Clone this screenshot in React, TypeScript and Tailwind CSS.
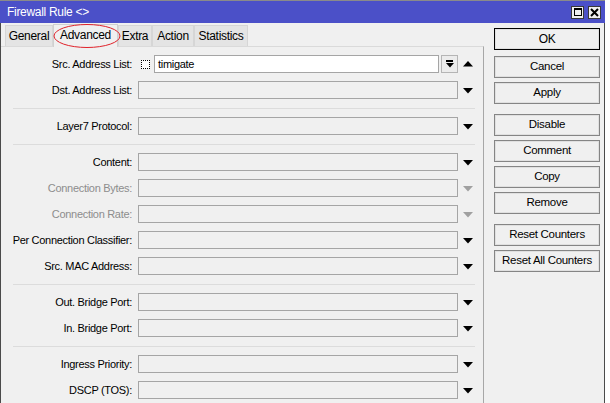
import React from "react";

const font = "font-['Liberation_Sans',Arial,sans-serif] text-[11px] tracking-[-0.3px]";

function Down({ gray = false }: { gray?: boolean }) {
  return (
    <svg width="10" height="6" viewBox="0 0 10 6" className="ml-[5px] mt-[1px]">
      <polygon points="0,0 10,0 5,5.5" fill={gray ? "#a0a0a0" : "#000"} />
    </svg>
  );
}

function Up() {
  return (
    <svg width="10" height="6" viewBox="0 0 10 6" className="ml-[5px] -mt-[1px]">
      <polygon points="5,0 10,5.5 0,5.5" fill="#000" />
    </svg>
  );
}

function Row({ label, disabled = false }: { label: string; disabled?: boolean }) {
  return (
    <div className="flex h-[26px] items-center">
      <div className={`w-[131px] text-right ${disabled ? "text-[#8d8d8d]" : "text-black"}`}>{label}</div>
      <div className="ml-[6px] h-[18px] w-[320px] border border-[#a5a5a5] bg-[#f0f0f0]" />
      <Down gray={disabled} />
    </div>
  );
}

function Sep() {
  return (
    <div className="flex h-[10px] items-center">
      <div className="ml-[12px] h-px w-[462px] bg-[#dcdcdc]" />
    </div>
  );
}

function Btn({ label, main = false }: { label: string; main?: boolean }) {
  return (
    <div
      className={`flex h-[22px] w-[106px] items-center justify-center border bg-[#f0f0f0] text-[11.5px] shadow-[inset_0_0_0_1px_#e0e0e0] ${
        main ? "mb-[2px] border-black text-[12px]" : "border-[#858585]"
      }`}
    >
      {label}
    </div>
  );
}

export default function App() {
  const tabs = [
    { name: "General", w: "w-[48px]" },
    { name: "Advanced", w: "w-[65px]", active: true },
    { name: "Extra", w: "w-[34px]" },
    { name: "Action", w: "w-[42px]" },
    { name: "Statistics", w: "w-[54px]" },
  ];

  return (
    <div className={`h-[403px] w-[610px] overflow-hidden bg-white ${font}`}>
      <div className="flex h-full w-[605px] flex-col">
        {/* title bar */}
        <div className="flex h-[23px] items-center border-t border-[#8a8a8a] bg-[#4b50c8] pl-[7px] pr-[4px] text-white">
          <span className="text-[12px]">Firewall Rule &lt;&gt;</span>
          <div className="ml-auto flex gap-[4px]">
            <div className="flex h-[13px] w-[13px] items-center justify-center border border-[#3a3a3a] bg-[#f0f0f0]">
              <div className="h-[8px] w-[8px] border border-black border-t-2" />
            </div>
            <div className="flex h-[13px] w-[13px] items-center justify-center border border-[#3a3a3a] bg-[#f0f0f0]">
              <svg width="9" height="9" viewBox="0 0 9 9">
                <path d="M1 1 L8 8 M8 1 L1 8" stroke="#000" strokeWidth="2" />
              </svg>
            </div>
          </div>
        </div>

        <div className="flex flex-1 border-x border-[#4a4a4a] bg-[#f0f0f0]">
          {/* left side: tabs + panel */}
          <div className="flex w-[483px] flex-col">
            <div className="relative flex h-[23px] items-end pl-[4px]">
              {tabs.map((t) =>
                t.active ? (
                  <div
                    key={t.name}
                    className={`${t.w} -mb-px flex h-[23px] items-center justify-center border-x border-t border-[#d0d0d0] bg-[#f0f0f0] pb-[2px] text-[12px]`}
                  >
                    {t.name}
                  </div>
                ) : (
                  <div
                    key={t.name}
                    className={`${t.w} flex h-[21px] items-center justify-center border-x border-t border-[#d6d6d6] bg-[#e4e4e4] text-[12px]`}
                  >
                    {t.name}
                  </div>
                )
              )}
              <svg
                className="absolute left-[52px] top-[0px]"
                width="68"
                height="26"
                viewBox="0 0 68 26"
              >
                <ellipse cx="34" cy="13" rx="33" ry="11.5" fill="none" stroke="#e0222a" strokeWidth="1" />
              </svg>
            </div>

            <div className="flex-1 border-r border-t border-[#a7a7a7] border-t-[#dadada] pt-[4px]">
              <div className="flex h-[26px] items-center">
                <div className="w-[131px] text-right">Src. Address List:</div>
                <div className="ml-[9px] h-[9px] w-[9px] border border-dotted border-black bg-white" />
                <div className="ml-[4px] flex h-[18px] w-[285px] items-center border border-[#a5a5a5] bg-white pl-[3px]">
                  timigate
                </div>
                <div className="ml-[2px] flex h-[18px] w-[17px] flex-col items-center justify-center border border-[#b5b5b5] bg-[#ececec]">
                  <div className="h-[1.5px] w-[7px] bg-black" />
                  <svg width="8" height="5" viewBox="0 0 8 5" className="mt-[1px]">
                    <polygon points="0,0 8,0 4,4.5" fill="#000" />
                  </svg>
                </div>
                <Up />
              </div>
              <Row label="Dst. Address List:" />
              <Sep />
              <Row label="Layer7 Protocol:" />
              <Sep />
              <Row label="Content:" />
              <Row label="Connection Bytes:" disabled />
              <Row label="Connection Rate:" disabled />
              <Row label="Per Connection Classifier:" />
              <Row label="Src. MAC Address:" />
              <Sep />
              <Row label="Out. Bridge Port:" />
              <Row label="In. Bridge Port:" />
              <Sep />
              <Row label="Ingress Priority:" />
              <Row label="DSCP (TOS):" />
            </div>
          </div>

          {/* right side: buttons */}
          <div className="flex flex-col gap-[4px] pl-[10px] pt-[5px]">
            <Btn label="OK" main />
            <Btn label="Cancel" />
            <Btn label="Apply" />
            <div className="h-[2px]" />
            <Btn label="Disable" />
            <Btn label="Comment" />
            <Btn label="Copy" />
            <Btn label="Remove" />
            <div className="h-[2px]" />
            <Btn label="Reset Counters" />
            <Btn label="Reset All Counters" />
          </div>
        </div>
      </div>
    </div>
  );
}
